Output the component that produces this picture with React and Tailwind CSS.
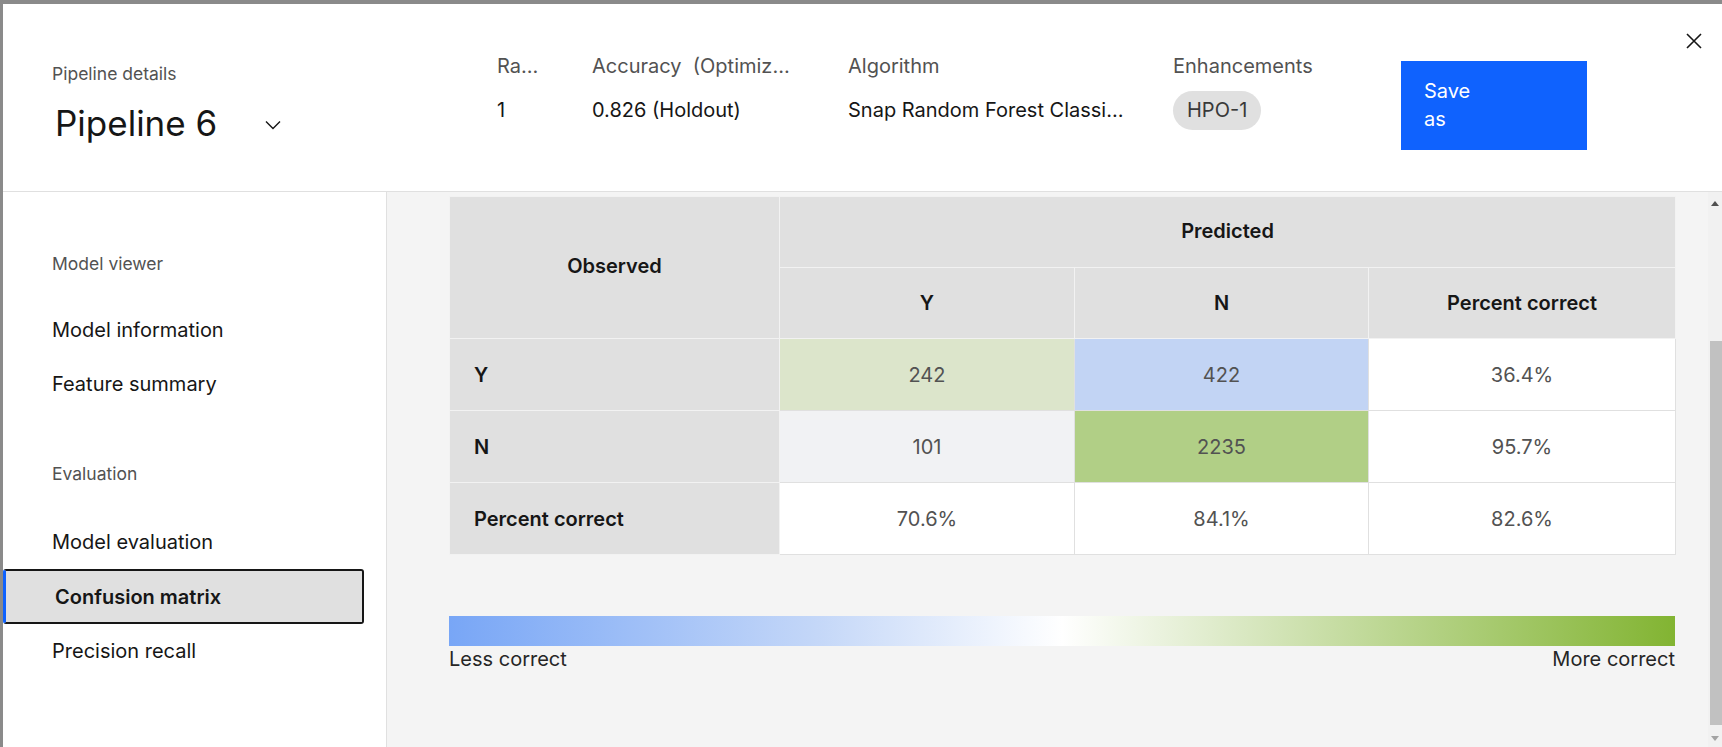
import React from 'react';

const SideLabel = ({ children, className = '' }) => (
  <div className={`h-[40px] flex items-center text-[17.5px] text-[#525252] pl-[49px] ${className}`}>{children}</div>
);

const SideItem = ({ children, active }) =>
  active ? (
    <div className="h-[55px] w-[361px] flex items-center bg-[#e0e0e0] border-2 border-[#161616] border-l-[3px] border-l-[#0f62fe] rounded-[3px] pl-[49px] text-[20px] font-semibold text-[#161616]">
      {children}
    </div>
  ) : (
    <div className="h-[54px] flex items-center pl-[49px] text-[20px] text-[#161616]">{children}</div>
  );

const Meta = ({ label, value, width }) => (
  <div className={`${width} pt-[50px] shrink-0`}>
    <div className="leading-[24px] text-[20px] text-[#525252] whitespace-pre">{label}</div>
    <div className="mt-[12px] h-[40px] flex items-center text-[20px] text-[#161616] whitespace-nowrap">{value}</div>
  </div>
);

const rows = [
  { label: 'Y', cells: [{ v: '242', bg: 'bg-[#dce5cb]' }, { v: '422', bg: 'bg-[#c2d4f4]' }, { v: '36.4%', bg: 'bg-white' }] },
  { label: 'N', cells: [{ v: '101', bg: 'bg-[#f1f2f4]' }, { v: '2235', bg: 'bg-[#b1cf86]' }, { v: '95.7%', bg: 'bg-white' }] },
  { label: 'Percent correct', cells: [{ v: '70.6%', bg: 'bg-white' }, { v: '84.1%', bg: 'bg-white' }, { v: '82.6%', bg: 'bg-white' }] },
];

export default function App() {
  return (
    <div className="w-[1722px] h-[747px] overflow-hidden bg-[#8a8a8a] pt-[4px] pl-[3px] font-['Inter',sans-serif]">
      <div className="w-[1719px] h-[743px] bg-white flex flex-col">
        {/* Header */}
        <div className="h-[188px] shrink-0 border-b border-[#e0e0e0] flex items-start">
          <div className="w-[494px] shrink-0 pl-[49px] pt-[58px]">
            <div className="leading-[24px] text-[17.5px] text-[#525252]">Pipeline details</div>
            <div className="mt-[15px] h-[44px] flex items-center">
              <span className="w-[213px] pl-[3px] text-[35px] leading-[44px] text-[#161616]">Pipeline 6</span>
              <svg width="16" height="10" viewBox="0 0 16 10" className="mt-[4px]">
                <polyline points="1,1.5 8,8.5 15,1.5" fill="none" stroke="#161616" strokeWidth="1.4" />
              </svg>
            </div>
          </div>
          <Meta width="w-[95px]" label="Ra…" value="1" />
          <Meta width="w-[256px]" label="Accuracy  (Optimiz…" value="0.826 (Holdout)" />
          <Meta width="w-[325px]" label="Algorithm" value="Snap Random Forest Classi…" />
          <Meta
            width="w-[228px]"
            label="Enhancements"
            value={<span className="h-[39px] px-[14px] rounded-full bg-[#e0e0e0] text-[#393939] flex items-center">HPO-1</span>}
          />
          <button className="mt-[57px] w-[186px] h-[89px] shrink-0 bg-[#0f62fe] text-white text-[20px] leading-[28px] text-left pl-[23px] pt-[16px] self-start flex items-start">
            <span className="w-[50px]">Save as</span>
          </button>
          <div className="flex-1" />
          <div className="w-[56px] h-[56px] mt-[9px] flex items-center justify-center shrink-0">
            <svg width="16" height="16" viewBox="0 0 16 16">
              <path d="M1 1 L15 15 M15 1 L1 15" stroke="#161616" strokeWidth="1.6" fill="none" />
            </svg>
          </div>
        </div>

        {/* Body */}
        <div className="flex-1 flex min-h-0">
          <div className="w-[384px] shrink-0 border-r border-[#e0e0e0] bg-white pt-[52px]">
            <SideLabel>Model viewer</SideLabel>
            <div className="mt-[19px]">
              <SideItem>Model information</SideItem>
              <SideItem>Feature summary</SideItem>
            </div>
            <SideLabel className="mt-[43px]">Evaluation</SideLabel>
            <div className="mt-[21px]">
              <SideItem>Model evaluation</SideItem>
              <SideItem active>Confusion matrix</SideItem>
              <SideItem>Precision recall</SideItem>
            </div>
          </div>

          <div className="flex-1 bg-[#f4f4f4] pl-[62px] pt-[4px]">
            <table className="w-[1226px] table-fixed border-collapse text-[20px]">
              <colgroup>
                <col className="w-[330px]" />
                <col className="w-[295px]" />
                <col className="w-[294px]" />
                <col className="w-[307px]" />
              </colgroup>
              <thead>
                <tr className="h-[71px]">
                  <th rowSpan={2} className="bg-[#e0e0e0] border border-[#f2f2f2] font-semibold text-[#161616] pb-[4px]">
                    Observed
                  </th>
                  <th colSpan={3} className="bg-[#e0e0e0] border border-[#f2f2f2] font-semibold text-[#161616] pb-[3px]">
                    Predicted
                  </th>
                </tr>
                <tr className="h-[71px]">
                  {['Y', 'N', 'Percent correct'].map((h) => (
                    <th key={h} className="bg-[#e0e0e0] border border-[#f2f2f2] font-semibold text-[#161616]">
                      {h}
                    </th>
                  ))}
                </tr>
              </thead>
              <tbody>
                {rows.map((r) => (
                  <tr key={r.label} className="h-[72px]">
                    <td className="bg-[#e0e0e0] border border-[#f2f2f2] pl-[24px] font-semibold text-[#161616]">{r.label}</td>
                    {r.cells.map((c, i) => (
                      <td key={i} className={`${c.bg} border border-[#e0e0e0] text-center text-[#525252]`}>
                        {c.v}
                      </td>
                    ))}
                  </tr>
                ))}
              </tbody>
            </table>

            <div className="w-[1226px] mt-[61px]">
              <div className="h-[30px] bg-[linear-gradient(to_right,#78a6f6,#c4d7f8_30%,#ffffff_50%,#d6e6bd_66%,#82b432)]" />
              <div className="flex justify-between text-[20px] leading-[26px] text-[#262626]">
                <span>Less correct</span>
                <span>More correct</span>
              </div>
            </div>
          </div>

          {/* scrollbar */}
          <div className="w-[14px] shrink-0 bg-[#f1f1f1] flex flex-col items-center">
            <div className="h-[22px] w-full flex items-center justify-center">
              <svg width="8" height="5" viewBox="0 0 8 5"><polygon points="0,5 4,0 8,5" fill="#505050" /></svg>
            </div>
            <div className="mt-[127px] h-[384px] w-[12px] ml-[1px] bg-[#c1c1c1]" />
            <div className="flex-1" />
            <div className="h-[18px] w-full flex items-center justify-center">
              <svg width="8" height="5" viewBox="0 0 8 5"><polygon points="0,0 8,0 4,5" fill="#a3a3a3" /></svg>
            </div>
          </div>
        </div>
      </div>
    </div>
  );
}
